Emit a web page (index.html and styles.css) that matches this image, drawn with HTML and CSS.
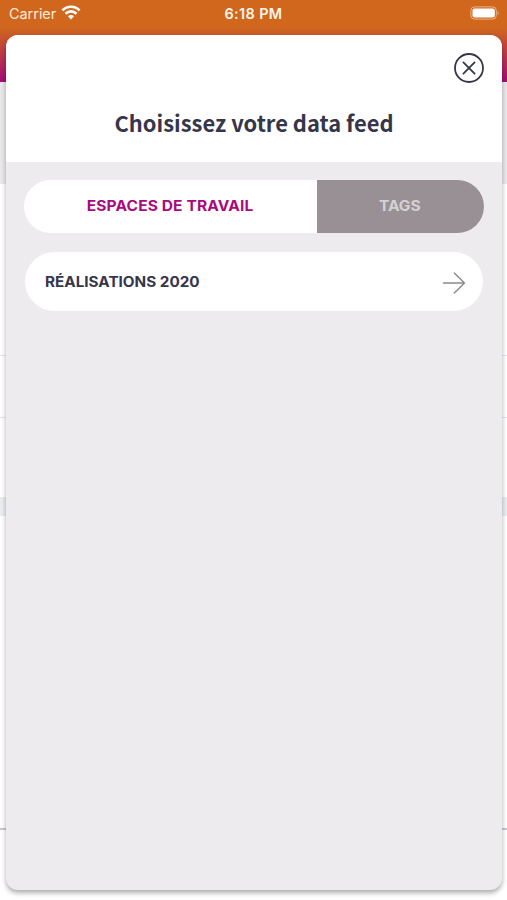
FILE: index.html
```html
<!DOCTYPE html>
<html lang="fr">
<head>
<meta charset="utf-8">
<meta name="viewport" content="width=device-width, initial-scale=1">
<title>Choisissez votre data feed</title>
<link rel="stylesheet" href="styles.css">
</head>
<body>
<div class="screen">
  <div class="backdrop">
    <header class="status">
      <div class="carrier"><span>Carrier</span>
        <svg class="wifi" width="20" height="15" viewBox="0 0 20 15" fill="none" stroke="#fff" stroke-width="2.7"><path d="M1.4 5.4C6.4.5 13.6.5 18.6 5.4"/><path d="M4.5 8.7C7.7 5.6 12.3 5.6 15.5 8.7"/><path d="M10 14.4 6.9 11.3C8.7 9.7 11.3 9.7 13.1 11.3Z" fill="#fff" stroke="none"/></svg>
      </div>
      <div class="clock">6:18 PM</div>
      <svg class="battery" width="30" height="14" viewBox="0 0 30 14"><rect x=".9" y=".9" width="25.4" height="12.2" rx="3.6" fill="none" stroke="#e9b48a" stroke-width="1"/><rect x="2.5" y="2.5" width="22.3" height="9" rx="2" fill="#fff"/><path d="M27.6 4.9q2.3 2.1 0 4.2Z" fill="#e9b48a"/></svg>
    </header>
    <div class="panel"></div>
    <div class="row row-tall"></div>
    <div class="row row-short"></div>
    <div class="row row-gap"></div>
    <div class="band"></div>
    <div class="rest"></div>
  </div>
  <main class="sheet">
    <div class="sheet-head">
      <button class="close" aria-label="Fermer"><svg width="32" height="32" viewBox="0 0 32 32" fill="none" stroke="#36364a" stroke-width="1.8" stroke-linecap="round"><circle cx="16" cy="16" r="14"/><path d="m10.4 10.4 11.2 11.2M21.6 10.4 10.4 21.6"/></svg></button>
      <h1>Choisissez votre data feed</h1>
    </div>
    <div class="sheet-body">
      <div class="tabs">
        <button class="tab tab-active"><span>ESPACES DE TRAVAIL</span></button>
        <button class="tab tab-muted"><span>TAGS</span></button>
      </div>
      <div class="item">
        <span class="item-label">RÉALISATIONS 2020</span>
        <svg width="24" height="24" viewBox="0 0 24 24" fill="none" stroke="#8d898d" stroke-width="1.4" stroke-linecap="round" stroke-linejoin="round"><path d="M1.5 12H22.5M12.3 2 22.5 12 12.3 22"/></svg>
      </div>
    </div>
  </main>
</div>
</body>
</html>
```
FILE: styles.css
```css
* { box-sizing: border-box; }
body { margin: 0; }
button { border: 0; padding: 0; background: none; font: inherit; }
svg { display: block; }
.screen { position: relative; width: 507px; height: 900px; overflow: hidden; background: #fff; }
.backdrop { display: flex; flex-direction: column; height: 100%; }
.status {
  display: grid;
  grid-template-columns: 1fr auto 1fr;
  align-items: start;
  height: 82px;
  padding: 6px 7px 0 9px;
  background: linear-gradient(#d1671d 0, #d1671d 27px, #c95a28 35px, #a50a78 82px);
  color: #fff;
  font: 14.4px/16px Inter, sans-serif;
}
.carrier { display: flex; gap: 5px; color: #fdebdc; }
.wifi { margin-top: -1px; }
.clock { font-weight: 600; font-size: 14.4px; letter-spacing: .4px; color: #fff5ec; margin-right: 2px; }
.battery { justify-self: end; }
.panel { height: 102px; background: #e9e7ea; }
.row { border-bottom: 1px solid #e4e3e6; }
.row-tall { height: 172px; }
.row-short { height: 62px; }
.row-gap { height: 79px; border: 0; }
.band { height: 19px; background: #e9edf0; }
.rest { height: 314px; border-bottom: 2px solid #c9c9cb; }
.sheet {
  position: absolute;
  inset: 35px 5px 10px 6px;
  display: flex;
  flex-direction: column;
  overflow: hidden;
  border-radius: 12px;
  background: #edebee;
  box-shadow: 0 3px 5px rgba(0, 0, 0, .32);
}
.sheet-head { display: flex; flex-direction: column; height: 127px; padding: 17px 17px 0; background: #fff; }
.close { align-self: flex-end; width: 32px; height: 32px; }
h1 {
  margin: 22px 0 0;
  text-align: center;
  color: #36364a;
  font: 700 21.9px/34px "Noto Sans CJK JP", sans-serif;
}
.sheet-body { flex: 1; padding: 18px 18px 0; }
.tabs { display: flex; height: 53px; overflow: hidden; border-radius: 27px; background: #fff; }
.tab { padding-bottom: 2px; font: 700 14px/20px Inter, sans-serif; }
.tab span { display: inline-block; transform: scaleX(1.11); }
.tab-active { width: 293px; color: #a9097c; letter-spacing: .1px; }
.tab-muted { flex: 1; padding-right: 2px; background: #999095; color: #d5d0d4; }
.item {
  display: flex;
  align-items: center;
  justify-content: space-between;
  height: 59px;
  margin: 19px 1px 0;
  padding: 2px 17.5px 0 20px;
  border-radius: 30px;
  background: #fff;
}
.item-label {
  margin-top: -2px;
  color: #36364a;
  font: 700 14px/20px Inter, sans-serif;
  transform: scaleX(1.09);
  transform-origin: left;
}
```
